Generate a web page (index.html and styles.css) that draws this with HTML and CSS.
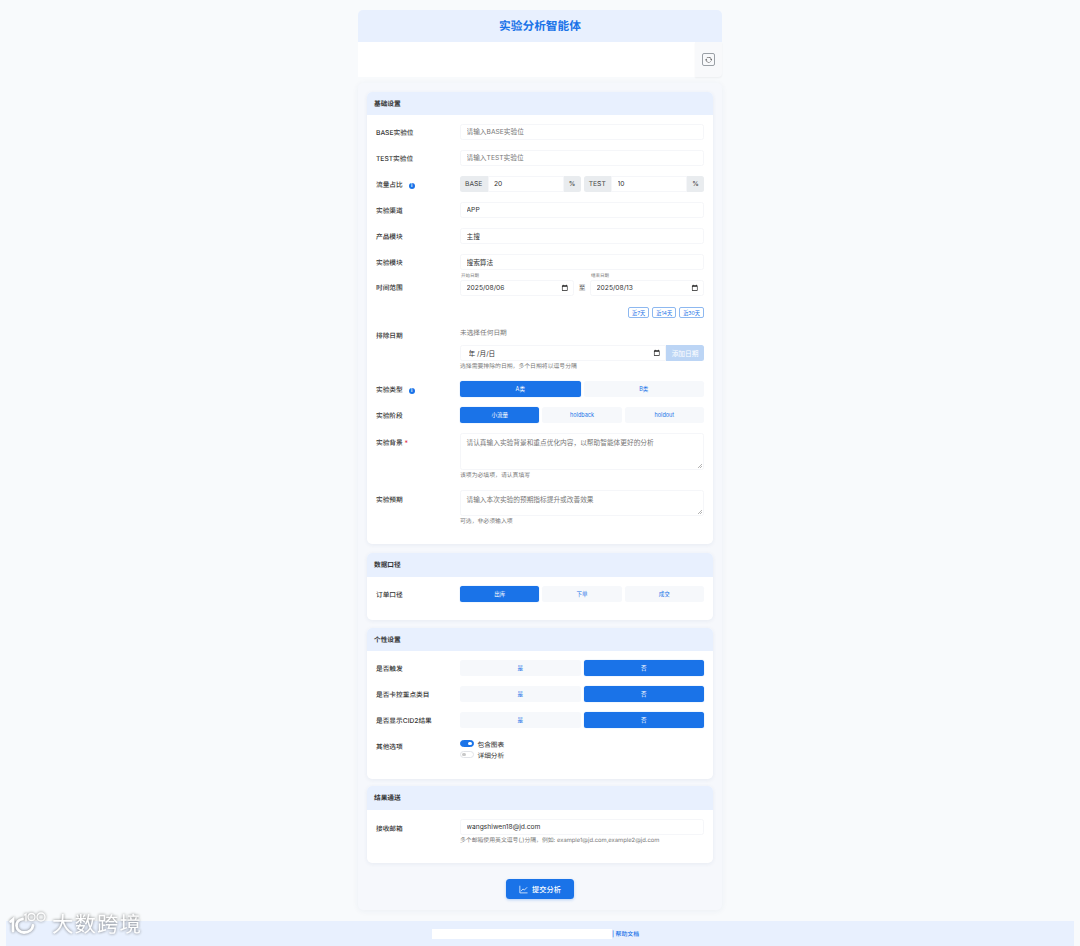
FILE: index.html
```html
<!DOCTYPE html>
<html lang="zh-CN">
<head>
  <meta charset="UTF-8">
  <title>实验分析智能体</title>
  <link rel="stylesheet" href="styles.css">
</head>
<body>
  <div class="app">
    <header class="app-title">实验分析智能体</header>
    <div class="notice">
      <div class="notice-text"></div>
      <div class="notice-side">
        <button class="refresh" type="button">
          <svg viewBox="0 0 16 16" width="7.5" height="7.5" fill="#444"><path d="M11.534 7h3.932a.25.25 0 0 1 .192.41l-1.966 2.36a.25.25 0 0 1-.384 0l-1.966-2.36a.25.25 0 0 1 .192-.41zm-11 2h3.932a.25.25 0 0 0 .192-.41L2.692 6.23a.25.25 0 0 0-.384 0L.342 8.59A.25.25 0 0 0 .534 9z"/><path d="M8 3c-1.552 0-2.94.707-3.857 1.818a.5.5 0 1 1-.771-.636A6.002 6.002 0 0 1 13.917 7H12.9A5.002 5.002 0 0 0 8 3zM3.1 9a5.002 5.002 0 0 0 8.757 2.182.5.5 0 1 1 .771.636A6.002 6.002 0 0 1 2.083 9H3.1z"/></svg>
        </button>
      </div>
    </div>

    <main class="panel">
      <section class="card card-basic">
        <h2 class="card-head">基础设置</h2>
        <div class="card-body">
          <div class="row">
            <label class="row-label">BASE实验位</label>
            <input class="field" type="text" placeholder="请输入BASE实验位">
          </div>
          <div class="row">
            <label class="row-label">TEST实验位</label>
            <input class="field" type="text" placeholder="请输入TEST实验位">
          </div>
          <div class="row">
            <label class="row-label">流量占比 <span class="info">i</span></label>
            <div class="traffic">
              <div class="group">
                <span class="addon addon-name">BASE</span>
                <input class="field" type="text" value="20">
                <span class="addon addon-unit">%</span>
              </div>
              <div class="group">
                <span class="addon addon-name">TEST</span>
                <input class="field" type="text" value="10">
                <span class="addon addon-unit">%</span>
              </div>
            </div>
          </div>
          <div class="row">
            <label class="row-label">实验渠道</label>
            <input class="field" type="text" value="APP">
          </div>
          <div class="row">
            <label class="row-label">产品模块</label>
            <input class="field" type="text" value="主搜">
          </div>
          <div class="row">
            <label class="row-label">实验模块</label>
            <input class="field" type="text" value="搜索算法">
          </div>
          <div class="row row-dates">
            <label class="row-label">时间范围</label>
            <div class="dates">
              <div class="date-col">
                <span class="date-cap">开始日期</span>
                <div class="field date-field">
                  <input class="date-input" type="text" value="2025/08/06">
                  <svg class="cal" viewBox="0 0 24 24" width="7.5" height="7.5" fill="#222"><path d="M19 4h-1V2h-2v2H8V2H6v2H5C3.9 4 3 4.9 3 6v14c0 1.1.9 2 2 2h14c1.1 0 2-.9 2-2V6c0-1.1-.9-2-2-2zm0 16H5V9h14v11z"/></svg>
                </div>
              </div>
              <span class="date-to">至</span>
              <div class="date-col">
                <span class="date-cap">结束日期</span>
                <div class="field date-field">
                  <input class="date-input" type="text" value="2025/08/13">
                  <svg class="cal" viewBox="0 0 24 24" width="7.5" height="7.5" fill="#222"><path d="M19 4h-1V2h-2v2H8V2H6v2H5C3.9 4 3 4.9 3 6v14c0 1.1.9 2 2 2h14c1.1 0 2-.9 2-2V6c0-1.1-.9-2-2-2zm0 16H5V9h14v11z"/></svg>
                </div>
              </div>
            </div>
          </div>
          <div class="quick">
            <button class="quick-btn" type="button">近7天</button>
            <button class="quick-btn" type="button">近14天</button>
            <button class="quick-btn" type="button">近30天</button>
          </div>
          <div class="row row-exclude">
            <label class="row-label">排除日期</label>
            <div>
              <div class="none-picked">未选择任何日期</div>
              <div class="exclude-line">
                <div class="field date-field">
                  <input class="date-input date-empty" type="text" value="年 /月/日">
                  <svg class="cal" viewBox="0 0 24 24" width="7.5" height="7.5" fill="#222"><path d="M19 4h-1V2h-2v2H8V2H6v2H5C3.9 4 3 4.9 3 6v14c0 1.1.9 2 2 2h14c1.1 0 2-.9 2-2V6c0-1.1-.9-2-2-2zm0 16H5V9h14v11z"/></svg>
                </div>
                <button class="add-date" type="button">添加日期</button>
              </div>
              <div class="hint">选择需要排除的日期，多个日期将以逗号分隔</div>
            </div>
          </div>
          <div class="row">
            <label class="row-label">实验类型 <span class="info">i</span></label>
            <div class="seg">
              <button class="seg-btn on" type="button">A类</button>
              <button class="seg-btn" type="button">B类</button>
            </div>
          </div>
          <div class="row">
            <label class="row-label">实验阶段</label>
            <div class="seg">
              <button class="seg-btn on" type="button">小流量</button>
              <button class="seg-btn" type="button">holdback</button>
              <button class="seg-btn" type="button">holdout</button>
            </div>
          </div>
          <div class="row row-top">
            <label class="row-label">实验背景 <span class="req">*</span></label>
            <div>
              <textarea class="field area-bg" placeholder="请认真输入实验背景和重点优化内容，以帮助智能体更好的分析"></textarea>
              <div class="hint">该项为必填项，请认真填写</div>
            </div>
          </div>
          <div class="row row-top">
            <label class="row-label">实验预期</label>
            <div>
              <textarea class="field area-exp" placeholder="请输入本次实验的预期指标提升或改善效果"></textarea>
              <div class="hint">可选，非必须输入项</div>
            </div>
          </div>
        </div>
      </section>

      <section class="card card-data">
        <h2 class="card-head">数据口径</h2>
        <div class="card-body">
          <div class="row">
            <label class="row-label">订单口径</label>
            <div class="seg">
              <button class="seg-btn on" type="button">出库</button>
              <button class="seg-btn" type="button">下单</button>
              <button class="seg-btn" type="button">成交</button>
            </div>
          </div>
        </div>
      </section>

      <section class="card card-custom">
        <h2 class="card-head">个性设置</h2>
        <div class="card-body">
          <div class="row">
            <label class="row-label">是否触发</label>
            <div class="seg">
              <button class="seg-btn" type="button">是</button>
              <button class="seg-btn on" type="button">否</button>
            </div>
          </div>
          <div class="row">
            <label class="row-label">是否卡控重点类目</label>
            <div class="seg">
              <button class="seg-btn" type="button">是</button>
              <button class="seg-btn on" type="button">否</button>
            </div>
          </div>
          <div class="row">
            <label class="row-label">是否显示CID2结果</label>
            <div class="seg">
              <button class="seg-btn" type="button">是</button>
              <button class="seg-btn on" type="button">否</button>
            </div>
          </div>
          <div class="row row-top row-switches">
            <label class="row-label">其他选项</label>
            <div>
              <div class="switch-line"><span class="switch on"></span>包含图表</div>
              <div class="switch-line"><span class="switch"></span>详细分析</div>
            </div>
          </div>
        </div>
      </section>

      <section class="card card-mail">
        <h2 class="card-head">结果通送</h2>
        <div class="card-body">
          <div class="row row-top">
            <label class="row-label">接收邮箱</label>
            <div>
              <input class="field" type="text" value="wangshiwen18@jd.com">
              <div class="hint">多个邮箱使用英文逗号(,)分隔，例如: example1@jd.com,example2@jd.com</div>
            </div>
          </div>
        </div>
      </section>

      <div class="submit-line">
        <button class="submit" type="button">
          <svg viewBox="0 0 16 16" width="9" height="9" fill="none" stroke="#fff" stroke-width="1.3" stroke-linecap="round" stroke-linejoin="round"><path d="M1.5 2v12h13"/><path d="M4 10.5l3-3.5 2.5 2L14 4.5"/></svg>
          提交分析
        </button>
      </div>
    </main>
  </div>

  <footer class="foot">
    <div class="foot-box"></div>
    <a class="foot-link">| 帮助文档</a>
  </footer>

  <div class="mark">
    <svg viewBox="0 0 44 26" width="44" height="26" fill="none" stroke="#fff" stroke-width="2.8" stroke-linecap="round"><path d="M2.500 9.500l2.500-2V19"/><path d="M14.500 7C10 8 8.500 10.500 8.500 13.500C8.500 17.500 12 20.500 16 20.500C21 20.500 24.500 17.500 25 13.500"/><path d="M16.500 3l1.500-1V9" stroke-width="1.300"/><circle cx="23.500" cy="5" r="3.500" stroke-width="1.300"/><circle cx="33" cy="5" r="4" stroke-width="1.300"/></svg>
    <span class="mark-text">大数跨境</span>
  </div>
</body>
</html>
```

FILE: styles.css
```css
* {
  box-sizing: border-box;
}
body {
  margin: 0;
  font-family: Inter, "Noto Sans CJK SC", sans-serif;
  font-size: 6.7px;
  color: #333;
  text-rendering: geometricPrecision;
  background-color: #f8fafc;
}
.app {
  width: 364px;
  margin: 0 auto;
  padding-top: 10px;
}
.app-title {
  height: 32px;
  line-height: 32px;
  text-align: center;
  font-size: 11.7px;
  font-weight: 700;
  color: #1a73e8;
  background-color: #e8f0fe;
  border-radius: 5px 5px 0 0;
}
.notice {
  display: flex;
  height: 35px;
}
.notice-text {
  flex: 1;
  background-color: #fff;
}
.notice-side {
  width: 27px;
  display: flex;
  align-items: center;
  justify-content: center;
  background-color: #f8f9fb;
  border-radius: 0 0 4px 0;
  box-shadow: 0 1px 2px rgba(0, 0, 0, 0.05);
}
.refresh {
  width: 13.5px;
  height: 13.5px;
  padding: 0;
  display: flex;
  align-items: center;
  justify-content: center;
  background: none;
  border: 1px solid #9aa0a6;
  border-radius: 2px;
}
.panel {
  margin-top: 5.5px;
  padding: 9px 9px 11px;
  background-color: #f6f8fc;
  border-radius: 5px;
  box-shadow: 0 1px 6px rgba(26, 60, 120, 0.06);
}
.card {
  background-color: #fff;
  border-radius: 5px;
  box-shadow: 0 1px 4px rgba(26, 60, 120, 0.07);
}
.card-basic { height: 452.5px; margin-bottom: 9px; }
.card-data { height: 67px; margin-bottom: 7.5px; }
.card-custom { height: 151.5px; margin-bottom: 7px; }
.card-mail { height: 77px; margin-bottom: 16px; }
.card-head {
  margin: 0;
  height: 23.5px;
  line-height: 25px;
  padding-left: 7px;
  font-size: 6.7px;
  font-weight: 700;
  color: #333;
  background-color: #e8f0fe;
  border-radius: 5px 5px 0 0;
}
.card-body {
  padding: 9px 9px 0;
}
.row {
  display: grid;
  grid-template-columns: 84px 1fr;
  align-items: center;
  margin-bottom: 10px;
}
.row-top {
  align-items: start;
}
.row-top > .row-label {
  padding-top: 4px;
}
.row-label {
  font-weight: 500;
  color: #333;
}
.field {
  display: block;
  width: 100%;
  height: 16px;
  padding: 0 5.5px;
  font-family: inherit;
  font-size: 6.7px;
  color: #333;
  background-color: #fff;
  border: 1px solid #f5f6f9;
  border-radius: 2.5px;
  outline: none;
}
.field::placeholder {
  color: #777;
}
textarea.field {
  padding: 3px 5.5px;
  resize: none;
  background: #fff linear-gradient(135deg, transparent 0 45%, #b5b5b5 45% 55%, transparent 55% 70%, #b5b5b5 70% 82%, transparent 82%) no-repeat right 1px bottom 1px / 4px 4px;
}
.area-bg { height: 37px; }
.area-exp { height: 26px; }
.date-field {
  display: flex;
  align-items: center;
}
.date-input {
  flex: 1;
  width: 0;
  padding: 0;
  font: inherit;
  color: inherit;
  background: none;
  border: none;
  outline: none;
}
.date-empty {
  padding-left: 2px;
}
.cal {
  flex: none;
  margin-right: -1px;
}
.info {
  display: inline-block;
  width: 6.5px;
  height: 6.5px;
  margin-left: 4px;
  line-height: 6.5px;
  text-align: center;
  font-size: 5px;
  font-weight: 700;
  color: #fff;
  background-color: #1a73e8;
  border-radius: 50%;
}
.req {
  color: #dc3545;
}
.traffic {
  display: flex;
  gap: 3px;
}
.group {
  flex: 1;
  display: flex;
}
.group .field {
  flex: 1;
  width: 0;
  border-radius: 0;
}
.addon {
  height: 16px;
  line-height: 16px;
  text-align: center;
  color: #444;
  background-color: #e9ecef;
}
.addon-name {
  width: 27.5px;
  border-radius: 2.5px 0 0 2.5px;
}
.addon-unit {
  width: 17px;
  border-radius: 0 2.5px 2.5px 0;
}
.row-dates {
  margin-top: -6px;
  margin-bottom: 11px;
  align-items: end;
}
.row-dates > .row-label {
  line-height: 15px;
}
.dates {
  display: flex;
  align-items: flex-end;
}
.date-col {
  flex: 1;
}
.date-cap {
  display: block;
  height: 6px;
  line-height: 6px;
  padding-left: 1px;
  font-size: 4.5px;
  color: #777;
}
.date-to {
  width: 16px;
  line-height: 16px;
  text-align: center;
  color: #555;
}
.quick {
  display: flex;
  justify-content: flex-end;
  gap: 3px;
  margin-bottom: 11px;
}
.quick-btn {
  height: 11px;
  padding: 0 3px;
  font-family: inherit;
  font-size: 5.2px;
  color: #1a73e8;
  background: #fff;
  border: 1px solid #8db8f0;
  border-radius: 2px;
}
.row-exclude {
  align-items: start;
}
.row-exclude > .row-label {
  padding-top: 1px;
}
.none-picked {
  height: 8px;
  line-height: 8px;
  margin-bottom: 8px;
  color: #777;
}
.exclude-line {
  display: flex;
}
.exclude-line .field {
  flex: 1;
  width: 0;
  border-radius: 2.5px 0 0 2.5px;
}
.add-date {
  width: 38px;
  height: 16px;
  padding: 0;
  font-family: inherit;
  font-size: 6.7px;
  color: #fff;
  background-color: #bcd5f5;
  border: none;
  border-radius: 0 2.5px 2.5px 0;
}
.hint {
  margin-top: 2px;
  line-height: 8px;
  font-size: 5.85px;
  color: #777;
}
.seg {
  display: flex;
  gap: 3px;
}
.seg-btn {
  flex: 1;
  height: 16px;
  padding: 0;
  font-family: inherit;
  font-size: 5.5px;
  color: #1a73e8;
  background-color: #f6f8fb;
  border: none;
  border-radius: 2.5px;
}
.seg-btn.on {
  color: #fff;
  background-color: #1a73e8;
  box-shadow: 0 0 1px rgba(26, 115, 232, 0.6);
}
.row-switches > .row-label {
  padding-top: 3px;
}
.switch-line {
  display: flex;
  align-items: center;
  gap: 4px;
  height: 11px;
}
.switch {
  position: relative;
  width: 13.5px;
  height: 6.5px;
  background-color: #fff;
  border: 1px solid #e2e4e8;
  border-radius: 4px;
}
.switch::after {
  content: "";
  position: absolute;
  top: 0.5px;
  left: 1px;
  width: 3.5px;
  height: 3.5px;
  background-color: #c9c9c9;
  border-radius: 50%;
}
.switch.on {
  background-color: #1a73e8;
  border-color: #1a73e8;
}
.switch.on::after {
  left: auto;
  right: 1px;
  background-color: #fff;
}
.submit-line {
  display: flex;
  justify-content: center;
}
.submit {
  display: flex;
  align-items: center;
  justify-content: center;
  gap: 4px;
  width: 68px;
  height: 20px;
  padding: 0;
  font-family: inherit;
  font-size: 7.2px;
  font-weight: 500;
  color: #fff;
  background-color: #1a73e8;
  border: none;
  border-radius: 3.5px;
  box-shadow: 0 1px 3px rgba(26, 115, 232, 0.3);
}
.foot {
  display: flex;
  align-items: center;
  justify-content: center;
  height: 25px;
  margin: 11px 6px 0;
  background-color: #e8f0fe;
}
.foot-box {
  width: 180px;
  height: 10px;
  background-color: #fff;
}
.foot-link {
  margin-right: 9px;
  font-size: 5.9px;
  font-weight: 500;
  color: #1a73e8;
}
.mark {
  position: absolute;
  left: 8px;
  top: 912px;
  display: flex;
  align-items: center;
  filter: drop-shadow(0 0 1.5px rgba(80, 80, 80, 0.8));
  opacity: 0.95;
}
.mark-text {
  font-size: 21.5px;
  line-height: 26px;
  letter-spacing: 1px;
  color: #fff;
}
```
